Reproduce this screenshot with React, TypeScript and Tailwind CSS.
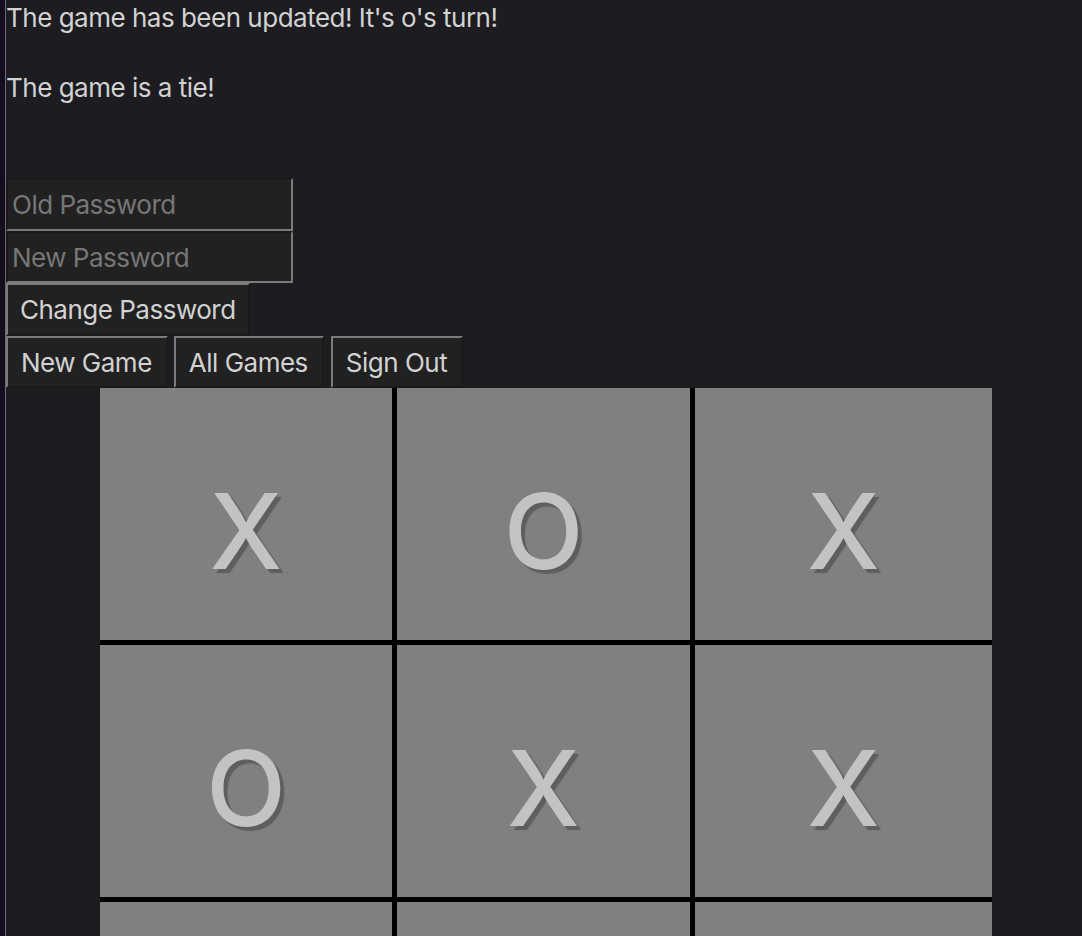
const board = ["X", "O", "X", "O", "X", "X", "", "", ""];

export default function App() {
  return (
    <div
      className="min-h-[936px] flex bg-[#1d1c20] text-[#d2d2d2] overflow-hidden tracking-[-0.5px]"
      style={{ fontFamily: "Inter, 'Noto Sans', sans-serif" }}
    >
      {/* left edge strip */}
      <div className="w-[5px] shrink-0 bg-[#140d1f]" />
      <div className="w-px shrink-0 bg-[#6a6a6e]" />

      <main className="flex-1 flex flex-col">
        <p className="text-[26px] leading-[36px] m-0">The game has been updated! It's o's turn!</p>
        <p className="text-[26px] leading-[36px] mt-[34px]">The game is a tie!</p>

        <form className="mt-[72px] flex flex-col items-start">
          <input
            type="password"
            placeholder="Old Password"
            className="w-[287px] h-[53px] px-[4px] text-[26px] bg-[#212121] border-2 border-t-[#1a1a1a] border-l-[#1a1a1a] border-r-[#7b7b7b] border-b-[#7b7b7b] placeholder:text-[#777] outline-none"
          />
          <input
            type="password"
            placeholder="New Password"
            className="w-[287px] h-[52px] px-[4px] text-[26px] bg-[#212121] border-2 border-t-[#1a1a1a] border-l-[#1a1a1a] border-r-[#7b7b7b] border-b-[#7b7b7b] placeholder:text-[#777] outline-none"
          />
          <button
            type="button"
            className="h-[53px] px-[12px] text-[26px] bg-[#212121] text-[#d2d2d2] border-2 border-t-[#7b7b7b] border-l-[#7b7b7b] border-r-[#1a1a1a] border-b-[#1a1a1a]"
          >
            Change Password
          </button>
        </form>

        <div className="flex gap-[6px]">
          {["New Game", "All Games", "Sign Out"].map((label, i) => (
            <button
              key={label}
              type="button"
              className={
                "h-[52px] pl-[13px] pr-[14px] text-[26px] bg-[#212121] text-[#d2d2d2] border-2 border-t-[#7b7b7b] border-l-[#7b7b7b] border-r-[#1a1a1a] border-b-[#1a1a1a]" +
                (i === 2 ? " ml-px" : "")
              }
            >
              {label}
            </button>
          ))}
        </div>

        <div className="ml-[94px] w-[892px] grid grid-cols-[292px_293px_297px] auto-rows-[252px] gap-[5px] bg-black tracking-normal">
          {board.map((v, i) => (
            <div
              key={i}
              className="bg-[#808080] flex items-center justify-center pt-[34px] text-[104px] font-medium leading-none text-[#c3c3c3] [text-shadow:4px_4px_1px_#5e5e5e]"
            >
              {v}
            </div>
          ))}
        </div>
      </main>
    </div>
  );
}
